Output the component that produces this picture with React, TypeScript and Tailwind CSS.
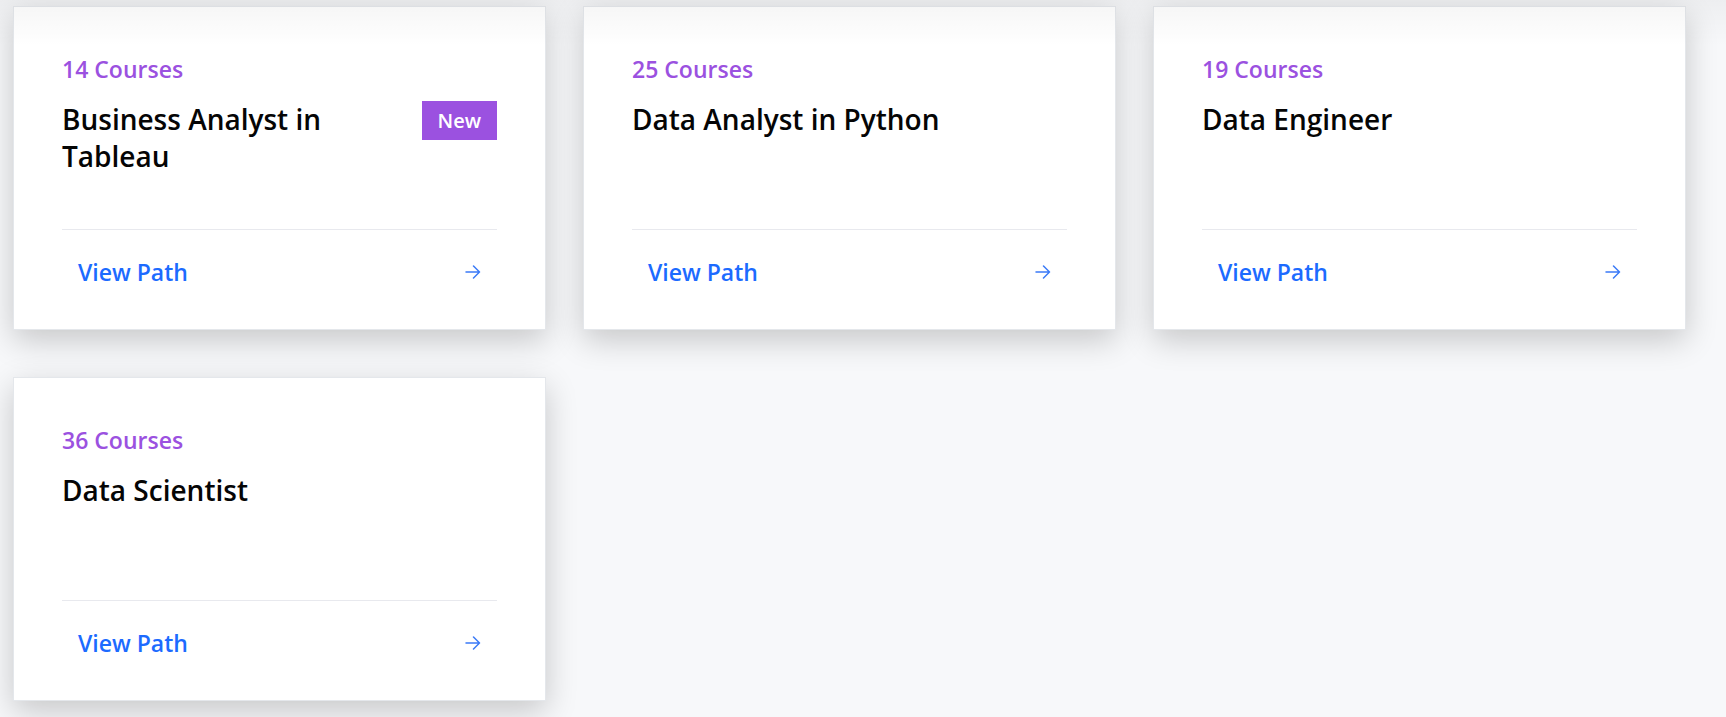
import React from "react";

type Path = {
  id: string;
  courses: number;
  title: string;
  isNew?: boolean;
};

const paths: Path[] = [
  { id: "ba-tableau", courses: 14, title: "Business Analyst in Tableau", isNew: true },
  { id: "da-python", courses: 25, title: "Data Analyst in Python" },
  { id: "data-eng", courses: 19, title: "Data Engineer" },
  { id: "data-sci", courses: 36, title: "Data Scientist" },
];

function ArrowIcon() {
  return (
    <svg width="16" height="14" viewBox="0 0 16 14" fill="none" className="text-[#3b7af7]">
      <path d="M1 7h13.5M8.5 1l6 6-6 6" stroke="currentColor" strokeWidth="1.5" strokeLinecap="round" strokeLinejoin="round" />
    </svg>
  );
}

function PathCard({ path }: { path: Path }) {
  return (
    <div className="flex h-[324px] flex-col border border-[#e4e7eb] bg-white px-12 pt-[46px] pb-[15px] shadow-[0_10px_30px_rgba(0,0,0,0.2)]">
      <div className="text-[23px] leading-[32px] font-semibold text-[#9b51e0]">
        {path.courses} Courses
      </div>
      <div className="mt-4 flex items-start justify-between gap-[60px]">
        <h2 className="min-w-0 flex-1 text-[28px] leading-[37px] font-semibold text-[#050505]">
          {path.title}
        </h2>
        {path.isNew && (
          <span className="flex h-[39px] shrink-0 items-center bg-[#9b51e0] px-4 text-[20px] font-semibold text-white">
            New
          </span>
        )}
      </div>
      <div className="mt-auto border-t border-[#e8e9ee]">
        <button className="flex h-[84px] w-full items-center justify-between px-4 text-left">
          <span className="text-[23px] leading-[32px] font-semibold text-[#1c6bff]">View Path</span>
          <ArrowIcon />
        </button>
      </div>
    </div>
  );
}

export default function App() {
  return (
    <div
      className="relative min-h-screen bg-[#f7f8fa] pt-[6px] pl-[13px]"
      style={{ fontFamily: '"Open Sans", "Noto Sans", Arial, sans-serif' }}
    >
      <div className="grid grid-cols-[repeat(3,533px)] gap-x-[37px] gap-y-[47px]">
        {paths.map((p) => (
          <PathCard key={p.id} path={p} />
        ))}
      </div>
      {/* fade under the header */}
      <div className="pointer-events-none absolute inset-x-0 top-0 h-[46px] bg-gradient-to-b from-black/[0.04] to-transparent" />
    </div>
  );
}
